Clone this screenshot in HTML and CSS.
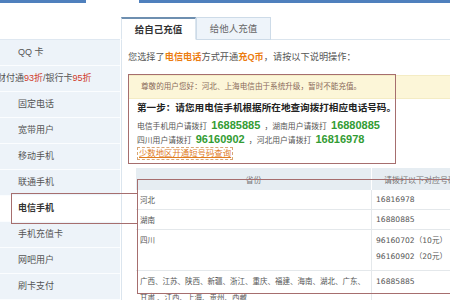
FILE: index.html
```html
<!DOCTYPE html>
<html lang="zh-CN">
<head>
    <meta charset="UTF-8">
    <title>Q币充值 - 电信手机</title>
    <link rel="stylesheet" href="styles.css">
</head>
<body>

    <div class="topbar">
        <span class="bar bar-left"></span>
        <span class="bar bar-right"></span>
    </div>

    <div class="page">
        <ul class="sidebar">
            <li>QQ 卡</li>
            <li class="wide">财付通<em>93折</em>/银行卡<em>95折</em></li>
            <li>固定电话</li>
            <li>宽带用户</li>
            <li>移动手机</li>
            <li>联通手机</li>
            <li class="current">电信手机</li>
            <li>手机充值卡</li>
            <li>网吧用户</li>
            <li>刷卡支付</li>
        </ul>

        <div class="panel">
            <div class="tabs">
                <span class="tab active">给自己充值</span>
                <span class="tab">给他人充值</span>
                <span class="tab-rest"></span>
            </div>

            <div class="panel-body">
                <p class="intro">您选择了<b>电信电话</b>方式开通<b>充Q币</b>，请按以下说明操作：</p>

                <div class="notice">尊敬的用户您好：河北、上海电信由于系统升级，暂时不能充值。</div>

                <div class="steps">
                    <h3>第一步：请您用电信手机根据所在地查询拨打相应电话号码。</h3>
                    <p class="dial">电信手机用户请拨打 <strong>16885885</strong> ，湖南用户请拨打 <strong>16880885</strong></p>
                    <p class="dial">四川用户请拨打 <strong>96160902</strong> ，河北用户请拨打 <strong>16816978</strong></p>
                    <a class="more" href="#">少数地区开通短号码查询</a>
                </div>

                <table class="numbers">
                    <tr>
                        <th class="col-area">省份</th>
                        <th class="col-num">请拨打以下对应号码</th>
                    </tr>
                    <tr>
                        <td>河北</td>
                        <td>16816978</td>
                    </tr>
                    <tr>
                        <td>湖南</td>
                        <td>16880885</td>
                    </tr>
                    <tr class="tall">
                        <td>四川</td>
                        <td>96160702（10元）<br>96160902（20元）</td>
                    </tr>
                    <tr class="tall">
                        <td>广西、江苏、陕西、新疆、浙江、重庆、福建、海南、湖北、广东、<br>甘肃 、江西、上海、贵州、西藏</td>
                        <td>16885885</td>
                    </tr>
                </table>
            </div>
        </div>
    </div>

    <!-- red marks drawn over the screenshot -->
    <div class="mark mark-side"></div>
    <div class="mark mark-notice"></div>
    <div class="mark mark-table"></div>

</body>
</html>
```

FILE: styles.css
```css
body {
    margin: 0;
    width: 450px;
    height: 300px;
    overflow: hidden;
    position: relative;
    background: #fff;
    font-family: "Liberation Sans", "Noto Sans CJK SC", sans-serif;
    font-size: 9px;
    color: #555;
}

.topbar {
    display: flex;
    height: 3px;
}

.bar {
    height: 3px;
    background: #4f80bd;
}

.bar-left {
    width: 86px;
}

.bar-right {
    margin-left: 53px;
    flex: 1;
}

.page {
    display: flex;
}

/* left menu */
.sidebar {
    list-style: none;
    margin: 36px 0 0;
    padding: 0;
    width: 120px;
    flex-shrink: 0;
    background: #edf3f9;
    border-top: 1px solid #dfe8f1;
}

.sidebar li {
    height: 25px;
    line-height: 25px;
    padding-left: 18px;
    border-bottom: 1px solid #fbfdff;
    color: #555;
    font-size: 9px;
    white-space: nowrap;
}

.sidebar li.wide {
    padding-left: 0;
    margin-left: -3px;
}

.sidebar em {
    font-style: normal;
    color: #d03a2a;
}

.sidebar li.current {
    background: #fff;
    font-weight: bold;
    color: #333;
}

/* right panel */
.panel {
    flex: 1;
    margin-top: 14px;
    margin-left: 1px;
}

.tabs {
    display: flex;
    height: 23px;
}

.tab {
    width: 75px;
    line-height: 22px;
    text-align: center;
    font-size: 9.5px;
    color: #666;
    background: #eef4fa;
    border: 1px solid #cddbe8;
    box-sizing: border-box;
}

.tab.active {
    background: #fff;
    color: #333;
    font-weight: bold;
    border: 1px solid #dbe5ee;
    border-top: 2px solid #6e8fb0;
    border-bottom: 1px solid #fff;
}

.tab-rest {
    flex: 1;
    border-bottom: 1px solid #dbe5ee;
}

.panel-body {
    border-left: 1px solid #dbe5ee;
    padding-top: 11px;
    height: 260px;
}

.intro {
    margin: 0 0 0 6px;
    line-height: 12px;
    font-size: 9.2px;
    color: #555;
}

.intro b {
    color: #ec7d12;
}

.notice {
    margin: 12px 0 0 6px;
    height: 22px;
    line-height: 22px;
    padding-left: 13px;
    background: #fcf6d8;
    border-top: 1px solid #f4ecc4;
    border-bottom: 1px solid #f4ecc4;
    font-size: 7.6px;
    color: #8a6a5a;
}

.steps {
    padding: 1px 0 0 15px;
}

.steps h3 {
    margin: 0;
    height: 16px;
    line-height: 16px;
    font-family: "Liberation Serif", "Noto Sans CJK SC", serif;
    font-size: 9.6px;
    font-weight: bold;
    color: #222;
}

.dial {
    margin: 0;
    height: 14px;
    line-height: 14px;
    font-size: 7.8px;
    color: #555;
    white-space: nowrap;
}

.dial:first-of-type {
    margin-top: 4px;
}

.dial strong {
    font-size: 11px;
    line-height: 1;
    color: #339c33;
    padding: 0 2px;
}

.more {
    display: block;
    width: max-content;
    height: 11px;
    margin-top: -1px;
    padding: 0 1px;
    line-height: 11px;
    font-size: 8.4px;
    color: #e07b1c;
    border: 1px dashed #d8a574;
}

/* number table */
.numbers {
    margin: 8px 0 0 14px;
    border-collapse: collapse;
    table-layout: fixed;
    width: 360px;
    font-size: 7.5px;
    color: #555;
}

.numbers th {
    height: 22px;
    background: #e6edf2;
    font-size: 8px;
    font-weight: normal;
    color: #777;
    text-align: center;
    padding: 0;
    white-space: nowrap;
}

.numbers th.col-area {
    width: 235px;
    border-right: 1px solid #fff;
}

.numbers th.col-num {
    text-align: left;
    padding-left: 12px;
}

.numbers td {
    height: 19px;
    padding: 0 4px;
    border-bottom: 1px solid #e4e8eb;
    white-space: nowrap;
    overflow: hidden;
}

.numbers td + td {
    border-left: 1px solid #e4e8eb;
    font-family: "DejaVu Sans", "Noto Sans CJK SC", sans-serif;
    font-size: 7.6px;
}

.numbers tr.tall td {
    height: 37px;
    vertical-align: top;
    padding-top: 3px;
    line-height: 16px;
}

/* annotation rectangles over the page */
.mark {
    position: absolute;
    border: 1px solid #a66e6e;
    pointer-events: none;
}

.mark-side {
    left: 11px;
    top: 193px;
    width: 125px;
    height: 29px;
}

.mark-notice {
    left: 128px;
    top: 74px;
    width: 266px;
    height: 88px;
}

.mark-table {
    left: 137px;
    top: 179px;
    width: 330px;
    height: 113px;
}
```
